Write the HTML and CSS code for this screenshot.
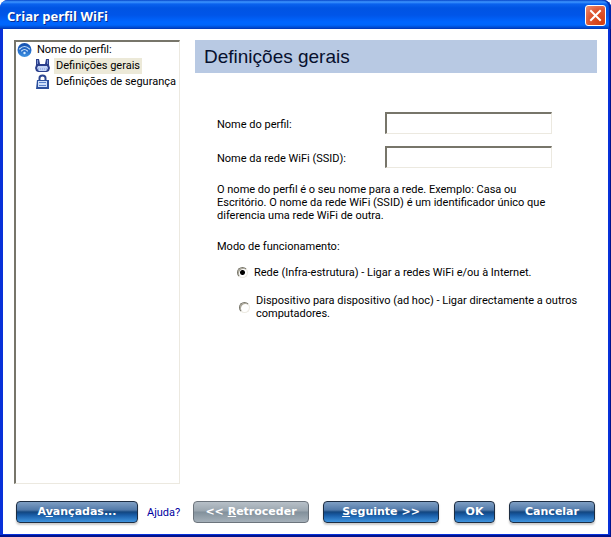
FILE: index.html
```html
<!DOCTYPE html>
<html lang="pt">
<head>
<meta charset="utf-8">
<meta name="viewport" content="width=device-width, initial-scale=1">
<title>Criar perfil WiFi</title>
<link rel="stylesheet" href="styles.css">
</head>
<body>
<form class="window">
  <header class="titlebar">
    <h1 class="caption">Criar perfil WiFi</h1>
    <button class="close" type="button" aria-label="Fechar">
      <svg viewBox="0 0 17 17" width="17" height="17" aria-hidden="true"><path d="M4 4l9 9M13 4l-9 9" stroke="#fff" stroke-width="2" stroke-linecap="square"/></svg>
    </button>
  </header>
  <div class="client">
    <div class="panes">
      <nav class="tree">
        <div class="node root">
          <svg viewBox="0 0 16 16" width="16" height="16" aria-hidden="true">
            <defs><linearGradient id="globe" x2="0" y2="1"><stop offset="0" stop-color="#1450ae"/><stop offset=".5" stop-color="#2369c8"/><stop offset="1" stop-color="#3f93e2"/></linearGradient></defs>
            <circle cx="7.500" cy="8" r="7" fill="url(#globe)"/>
            <g fill="none" stroke="#c4def8" stroke-width="1.1" stroke-linecap="round"><path d="M2.500 7Q7.500 2 12.500 7"/><path d="M4.500 9Q7.500 6 10.500 9"/></g>
            <circle cx="7.500" cy="11" r="1.200" fill="#d8ecff"/>
          </svg>
          <span class="label">Nome do perfil:</span>
        </div>
        <div class="node child">
          <svg viewBox="0 0 16 16" width="16" height="16" aria-hidden="true">
            <path d="M1 1h3l1 5h5l1-5h3v6l1 3-1 3-2 1H3l-2-1-1-3 1-3z" fill="#2b3f8c"/>
            <path d="M2.500 2v4M12.500 2v4" stroke="#7e95d2"/>
            <path d="M3 8h9l1 2-1 2-1 1H4l-1-1-1-2z" fill="#c3d4f6"/>
            <path d="M3 11h9" stroke="#7f9ade" stroke-dasharray="1 1"/>
          </svg>
          <a class="label selected" href="#geral">Definições gerais</a>
        </div>
        <div class="node child">
          <svg viewBox="0 0 16 16" width="16" height="16" aria-hidden="true">
            <path d="M4.500 7V4q0-2.500 3-2.500t3 2.500v3" fill="none" stroke="#2b4590" stroke-width="2"/>
            <path d="M2 6h12v9H1z" fill="#2c4f9c"/>
            <path d="M3 7h9v6H3z" fill="#cfdff9"/>
            <path d="M4 8.500h7M4 11.500h7" stroke="#5a82cc"/>
          </svg>
          <a class="label" href="#seguranca">Definições de segurança</a>
        </div>
      </nav>
      <main class="content" id="geral">
        <h2 class="heading">Definições gerais</h2>
        <div class="settings">
          <div class="fields">
            <label for="profile">Nome do perfil:</label>
            <input class="textbox" id="profile" type="text">
            <label for="ssid">Nome da rede WiFi (SSID):</label>
            <input class="textbox" id="ssid" type="text">
          </div>
          <p class="help-text">O nome do perfil é o seu nome para a rede. Exemplo: Casa ou<br>Escritório. O nome da rede WiFi (SSID) é um identificador único que<br>diferencia uma rede WiFi de outra.</p>
          <fieldset class="modes">
            <legend>Modo de funcionamento:</legend>
            <div class="mode">
              <input class="radio" type="radio" name="mode" id="infra" checked>
              <label for="infra">Rede (Infra-estrutura) - Ligar a redes WiFi e/ou à Internet.</label>
            </div>
            <div class="mode adhoc">
              <input class="radio" type="radio" name="mode" id="adhoc">
              <label for="adhoc">Dispositivo para dispositivo (ad hoc) - Ligar directamente a outros<br>computadores.</label>
            </div>
          </fieldset>
        </div>
      </main>
    </div>
    <footer class="actions">
      <button class="btn wide" type="button">A<u>v</u>ançadas...</button>
      <a class="help" href="#ajuda">Ajuda?</a>
      <button class="btn medium" type="button" disabled>&lt;&lt; <u>R</u>etroceder</button>
      <button class="btn medium" type="button"><u>S</u>eguinte &gt;&gt;</button>
      <button class="btn small" type="button">OK</button>
      <button class="btn cancel" type="button">Cancelar</button>
    </footer>
  </div>
</form>
</body>
</html>
```
FILE: styles.css
```css
* { box-sizing: border-box; }

body {
  margin: 0;
  background: #fff;
  color: #000;
  font: 11px/13px Roboto, "Liberation Sans", sans-serif;
}

.window {
  display: flex;
  flex-direction: column;
  min-height: 100vh;
  border-radius: 8px 8px 0 0;
  background: #0831d9;
  box-shadow: inset -1px -2px 0 #00138c;
}

.titlebar {
  display: flex;
  align-items: center;
  justify-content: space-between;
  height: 29px;
  padding: 2px 5px 0 7px;
  border-radius: 8px 8px 0 0;
  background: linear-gradient(#0a4fd0 0, #3d95ff 2px, #0a62ee 4px, #0054e3 8px, #0055e8 15px, #0066ff 22px, #0066fb 25px, #0045c8 28px, #003bb5);
  box-shadow: inset -2px 0 1px #0026a8;
}

.caption {
  margin: 0;
  color: #fff;
  font: bold 13px/18px "Open Sans", "Trebuchet MS", sans-serif;
  text-shadow: 1px 1px 0 #0a2f91;
}

.close {
  display: grid;
  place-items: center;
  width: 21px;
  height: 21px;
  padding: 0;
  border: 1px solid #fff;
  border-radius: 3px;
  background: radial-gradient(circle at 80% 85%, #d53f10, #dd5531 55%, #ed9277);
}

.client {
  display: flex;
  flex: 1;
  flex-direction: column;
  margin: 0 3px 3px;
  padding: 11px;
  background: #fff;
}

.panes {
  display: flex;
  flex: 1;
  gap: 15px;
}

.tree {
  flex: none;
  width: 166px;
  padding: 0 1px;
  border: 1px solid #ece9e0;
  border-top: 2px solid #77756a;
  border-left: 2px solid #77756a;
}

.node {
  display: flex;
  align-items: center;
  gap: 2px;
  height: 16px;
}

.child {
  gap: 3px;
  padding-left: 18px;
}

.label {
  padding: 0 2px;
  color: inherit;
  line-height: 16px;
  text-decoration: none;
  white-space: nowrap;
}

.selected { background: #ece9d8; }

.content {
  flex: 1;
  min-width: 0;
}

.heading {
  margin: 0;
  padding: 1px 9px 0;
  background: #b8c9e3;
  color: #07102e;
  font: 19px/32px "Liberation Sans", Arial, sans-serif;
}

.settings { padding: 39px 22px 0; }

.fields {
  display: grid;
  grid-template-columns: 156px 167px;
  row-gap: 12px;
  column-gap: 12px;
  align-items: center;
}

.fields label { padding-top: 2px; }

.textbox {
  width: 100%;
  height: 22px;
  padding: 2px 4px;
  border: 1px solid #ece9e0;
  border-top: 2px solid #77756a;
  border-left: 2px solid #77756a;
  background: #fff;
  font: inherit;
}

.help-text {
  margin: 15px 0 0;
  white-space: nowrap;
}

.modes {
  min-width: 0;
  margin: 18px 0 0;
  padding: 13px 0 0;
  border: 0;
}

.modes legend { padding: 0; }

.mode {
  display: flex;
  align-items: center;
  gap: 6px;
  padding-left: 20px;
  white-space: nowrap;
}

.adhoc {
  margin-top: 15px;
  padding-left: 22px;
}

.radio {
  appearance: none;
  flex: none;
  width: 11px;
  height: 11px;
  margin: 0;
  border: 1px solid;
  border-color: #77756a #eceae2 #eceae2 #77756a;
  border-radius: 50%;
  box-shadow: inset 1px 1px 0 #aca899;
}

.radio:checked { background: radial-gradient(circle, #000 2px, #fff 3px); }

.actions {
  display: flex;
  align-items: center;
  margin-top: 17px;
  padding: 0 2px;
}

.btn {
  height: 22px;
  padding: 0;
  border: 1px solid #1d2d42;
  border-radius: 4px;
  background: linear-gradient(#7f9fc4 0, #5179a9 40%, #124680 50%, #185ba5 65%, #3f94df 100%);
  box-shadow: 0 2px 2px #ccc;
  color: #fff;
  font: bold 11px/18px "DejaVu Sans", Verdana, sans-serif;
  white-space: nowrap;
}

.btn:disabled {
  border-color: #6c747c;
  background: linear-gradient(#b7c0c8, #9ba6af 45%, #82909b 50%, #a5b0b9);
  box-shadow: none;
}

.wide { width: 122px; }
.medium { width: 116px; }
.medium + .medium { margin-left: 14px; }
.small { width: 41px; margin-left: auto; }
.cancel { width: 86px; margin-left: 14px; }

.help {
  width: 46px;
  margin-left: 9px;
  color: #0000a0;
  text-decoration: none;
}
```
